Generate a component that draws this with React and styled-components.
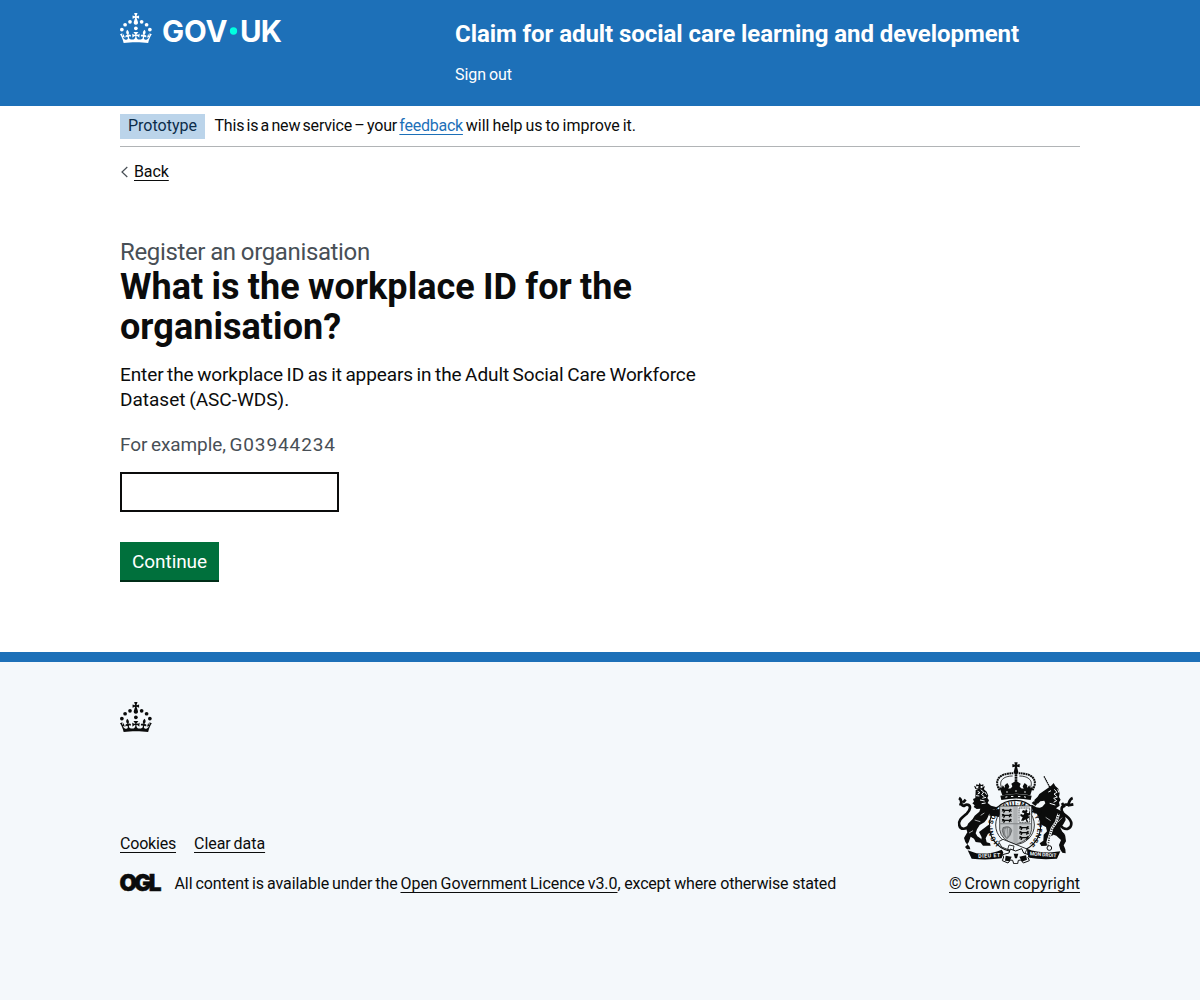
import React from 'react';
import styled, { createGlobalStyle, css } from 'styled-components';

const ink = '#0b0c0c';
const brand = '#1d70b8';
const secondary = '#484f56';
const footerBg = '#f4f8fb';

const GlobalStyle = createGlobalStyle`
  html { background: ${footerBg}; }
  body {
    margin: 0;
    background: #fff;
    color: ${ink};
    font-family: Roboto, "Liberation Sans", Arial, sans-serif;
    font-size: 16px;
    line-height: 20px;
    word-spacing: -1px;
  }
  *, *::before, *::after { box-sizing: border-box; }
`;

const Container = styled.div`
  width: 960px;
  margin: 0 auto;
`;

const tracking = css`
  letter-spacing: ${({ $track }) => $track || 0}px;
`;

const Header = styled.header`
  height: 106px;
  background: ${brand};
  color: #fff;
`;

const HeaderRow = styled(Container)`
  display: flex;
`;

const LogoLink = styled.a`
  display: block;
  width: 335px;
  padding-top: 13px;
  color: #fff;
  text-decoration: none;
`;

const LogoSvg = styled.svg`
  display: block;
  fill: currentColor;
  overflow: visible;
`;

const LogoWord = styled.text`
  font-family: Inter, Roboto, sans-serif;
  font-weight: 650;
  font-size: 59px;
  word-spacing: 0;
`;

const ServiceColumn = styled.div`
  flex: 1;
  padding-top: 19px;
`;

const ServiceName = styled.a`
  display: block;
  color: #fff;
  font-size: 24px;
  font-weight: 700;
  line-height: 30px;
  letter-spacing: -0.068px;
  word-spacing: 0;
  text-decoration: none;
`;

const ServiceNav = styled.nav`
  padding-top: 16px;
`;

const NavLink = styled.a`
  color: #fff;
  letter-spacing: -0.05px;
  text-decoration: none;
`;

const PhaseBanner = styled.div`
  display: flex;
  align-items: center;
  height: 41px;
  border-bottom: 1px solid #b1b4b6;
`;

const Tag = styled.strong`
  padding: 2px 8px 3px;
  margin-right: 9.5px;
  background: #bbd4ea;
  color: #0c2d4a;
  font-weight: 400;
`;

const Phrase = styled.span`
  white-space: pre;
  word-spacing: ${({ $gap = -1 }) => $gap}px;
  ${tracking}
`;

const Link = styled.a`
  color: ${({ $blue }) => ($blue ? brand : ink)};
  text-decoration: underline;
  text-decoration-thickness: 1px;
  text-underline-offset: 3px;
  text-decoration-skip-ink: none;
  white-space: nowrap;
  ${tracking}
`;

const BackRow = styled.div`
  display: flex;
  align-items: center;
  gap: 5px;
  padding-top: 15px;
`;

const Main = styled.main`
  width: 630px;
  padding: 55px 0 70px;
`;

const Caption = styled.span`
  display: block;
  color: ${secondary};
  font-size: 24px;
  line-height: 30px;
  letter-spacing: -0.36px;
  word-spacing: -0.5px;
`;

const Heading = styled.h1`
  margin: 0 0 15px;
  font-size: 36px;
  font-weight: 700;
  line-height: 40px;
  letter-spacing: 0.05px;
  word-spacing: -0.8px;
`;

const Body = styled.p`
  margin: 0 0 20px;
  font-size: 19px;
  line-height: 25px;
`;

const Line = styled.span`
  display: block;
  ${tracking}
`;

const Hint = styled.div`
  margin-bottom: 15px;
  color: ${secondary};
  font-size: 19px;
  line-height: 25px;
`;

const TextInput = styled.input`
  display: block;
  width: 219px;
  height: 40px;
  margin: 0 0 30px;
  padding: 5px;
  border: 2px solid ${ink};
  border-radius: 0;
  font: inherit;
`;

const Button = styled.button`
  display: block;
  height: 38px;
  padding: 1px 12px 0;
  margin-bottom: 2px;
  border: 0;
  background: #00703c;
  box-shadow: 0 2px 0 #002d18;
  color: #fff;
  font-family: inherit;
  font-size: 19px;
  line-height: 38px;
  letter-spacing: -0.07px;
`;

const Footer = styled.footer`
  min-height: 348px;
  border-top: 10px solid ${brand};
  background: ${footerBg};
`;

const FooterInner = styled(Container)`
  padding-top: 40px;
`;

const FooterMeta = styled.div`
  display: flex;
  justify-content: space-between;
  align-items: flex-end;
  padding-top: 30px;
`;

const FooterLinks = styled.div`
  display: flex;
  gap: 18px;
  margin-bottom: 20px;
`;

const LicenceRow = styled.div`
  display: flex;
  align-items: center;
`;

const OglSvg = styled.svg`
  display: block;
  width: 41px;
  height: 17px;
  margin: 0 13.5px 3px 0;
  overflow: visible;
`;

const OglWord = styled.text`
  font-family: Inter, sans-serif;
  font-weight: 900;
  font-size: 22.5px;
  stroke: ${ink};
  stroke-width: 0.5px;
`;

const Copyright = styled.div`
  display: flex;
  flex-direction: column;
  align-items: flex-end;
`;

const CrestSvg = styled.svg`
  display: block;
  width: 125px;
  height: 102px;
  margin: 0 2px 10px 0;
`;

const CrestText = styled.text`
  font-family: Roboto, sans-serif;
  font-weight: 700;
  font-size: ${({ $size }) => $size}px;
  word-spacing: 0;
`;

const dots = [[20, 17.6], [10.2, 23.5], [3.7, 33.2], [31.7, 30.6], [43.3, 17.6], [53.2, 23.5], [59.7, 33.2]];

function Crown() {
  return (
    <g>
      {dots.map(([x, y]) => <circle key={x} cx={x} cy={y} r="3.7" />)}
      <path d="M33.1,9.8c.2-.1.3-.3.5-.5l4.6,2.4v-6.8l-4.6,1.5c-.1-.2-.3-.3-.5-.5l1.9-5.9h-6.7l1.9,5.9c-.2.1-.3.3-.5.5l-4.6-1.5v6.8l4.6-2.4c.1.2.3.3.5.5l-2.6,8c-.9,2.8,1.2,5.7,4.1,5.7h0c3,0,5.1-2.9,4.1-5.7l-2.6-8ZM37,37.9s-3.4,3.8-4.1,6.1c2.2,0,4.2-.5,6.4-2.8l-.7,8.5c-2-2.8-4.4-4.1-5.7-3.8.1,3.1.5,6.7,5.8,7.2,3.7.3,6.7-1.5,7-3.8.4-2.6-2-4.3-3.7-1.6-1.4-4.5,2.4-6.1,4.9-3.2-1.9-4.5-1.8-7.7,2.4-10.9,3,4,2.6,7.3-1.2,11.1,2.4-1.3,6.2,0,4,4.6-1.2-2.8-3.7-2.2-4.2.2-.3,1.7.7,3.7,3,4.2,1.9.3,4.7-.9,7-5.9-1.3,0-2.4.7-3.9,1.7l2.4-8c.6,2.3,1.4,3.7,2.2,4.5.6-1.6.5-2.8,0-5.3l5,1.8c-2.6,3.6-5.2,8.7-7.3,17.5-7.4-1.1-15.7-1.7-24.5-1.7h0c-8.8,0-17.1.6-24.5,1.7-2.1-8.9-4.7-13.9-7.3-17.5l5-1.8c-.5,2.5-.6,3.7,0,5.3.8-.8,1.6-2.3,2.2-4.5l2.4,8c-1.5-1-2.6-1.7-3.9-1.7,2.3,5,5.2,6.2,7,5.9,2.3-.4,3.3-2.4,3-4.2-.5-2.4-3-3.1-4.2-.2-2.2-4.6,1.6-6,4-4.6-3.7-3.7-4.2-7.1-1.2-11.1,4.2,3.2,4.3,6.4,2.4,10.9,2.5-2.8,6.3-1.3,4.9,3.2-1.8-2.7-4.1-1-3.7,1.6.3,2.3,3.3,4.1,7,3.8,5.4-.5,5.7-4.2,5.8-7.2-1.3-.2-3.7,1-5.7,3.8l-.7-8.5c2.2,2.3,4.2,2.7,6.4,2.8-.7-2.3-4.1-6.1-4.1-6.1h10.6,0Z" />
    </g>
  );
}

function PassantLions({ x, y }) {
  return (
    <g transform={`translate(${x} ${y})`}>
      {[0, 15, 30].map((dy) => (
        <path
          key={dy}
          transform={`translate(0 ${dy})`}
          d="M2 3l5-2 4 3h13l4-3 5 2-3 2 3 5-5-1-1 3h-4l1-4H13l-3 5H6l2-5-6 2 2-4z"
        />
      ))}
    </g>
  );
}

function Crest() {
  return (
    <CrestSvg viewBox="9 21 375 306" fill={ink} aria-hidden="true">
      <defs>
        <path id="garter" d="M150 266A67 65 0 1 1 240 266" />
      </defs>

      {/* imperial crown */}
      <path d="M193 22h10l-2 7 8-2v10l-8-2 3 12h-12l3-12-8 2v-10l8 2z" />
      <circle cx="198" cy="51" r="7" />
      <g fill="none" stroke={ink}>
        <path strokeWidth="6" strokeDasharray="6 1.5" d="M149 106C130 76 148 54 190 55M247 106C266 76 248 54 206 55" />
        <path strokeWidth="2.5" d="M157 102C143 78 160 63 188 63M239 102C253 78 236 63 208 63" />
        <path strokeWidth="8" strokeDasharray="6 1.5" d="M198 58v29" />
      </g>
      <path d="M147 94l8 6 3-9 7 8-1-8 8-7 6 10-3 7 8-1 4-6-3-8 14-9 14 9-3 8 4 6 8 1-3-7 6-10 8 7-1 8 7-8 3 9 8-6-8 27q-41-10-84 0z" />
      <path d="M151 122q47-10 94 0l-3 13q-44-9-88 0z" />
      <g fill={footerBg}>
        <circle cx="171" cy="111" r="2.5" /><circle cx="198" cy="108" r="2.5" /><circle cx="225" cy="111" r="2.5" />
        <path d="M166 125l6-1v3l-6 1zM183 123h7v3h-7zM204 123h7v3h-7zM222 124l6 1v3l-6-1z" />
      </g>

      {/* lion supporter */}
      <path d="M76 102l-4-10 6 3 1-7 7 2 3-7 4 7 7-2v8l5-3-4 11q-13-5-25-2z" />
      <path d="M79 93l7 1-2 6h-6zM92 93h6l-1 6-5 1z" fill={footerBg} />
      <path d="M77 105l9-4 15 1 9 8 5 12-3 7 5 7-4 8 10 8 15 4 12-3 6 5-3 6 5 5-8 3-4 8-15-3-13-1-7 16-8 10-14 8-8 13-4 12 5 9 9 6 8 8-5 5-17-2-5-10-10-6-6 17-4 5 7 8 2 8H51l-6-7 7-7-6-8-4-12 10-17-3-10 5-16 14-14 6-10 14-12 3-9-11 1-9-6 3-5-7-6 5-5-3-8 7-3z" />
      <path d="M115 210l14 3 7 12-8 7-14 4-7 14 3 12 10 3 2 7H99l-7-9 3-16-8-16z" />
      <path fill="none" stroke={ink} strokeWidth="8" strokeLinejoin="round" d="M62 208c-14 18-31 16-34 3-4-16 9-24 22-35 13-12 13-25 2-27-8-2-8 8-15 2-7-5 2-15-10-22M40 150l-12-3M39 143l8-9" />
      <g fill="none" stroke={footerBg} strokeWidth="3">
        <path d="M83 109l7 4-7 4M92 104l9 7-6 8 8 6M78 122l10 1M97 130l11-3M104 111l6 8M90 135l14 3M95 146l12-2M122 163l18 3M121 179l19-2" />
        <path strokeWidth="2" d="M74 195l17 5M57 234l12-7M92 181l11-7" />
      </g>

      {/* unicorn supporter */}
      <path fill="none" stroke={ink} strokeWidth="4" strokeDasharray="5 1.5" d="M282 64l19 36" />
      <path d="M295 98l10-7 6-7 5 9 9 8 4 13-2 12 5 8-5 8 2 10-11 8 14 7 13 13 2 15-7 13-9 10 6 12 8 7 3 22-7 12 5 12 1 12-10-2-6-9-4-14 6-15-14-13-20-7-5-15-19-11-15-10-14 4-12 16-8-4 7-24-14 2-4-9 9-10 18 1 8-9 13-5 14-6 9-10-3-8-12 2-7 7-10-3-1-8 10-10 5-8z" />
      <path d="M299 214l14 12-3 14-17 8-4 14 3 10-18 1-5-8 11-8 1-18 10-10-3-12z" />
      <path d="M256 153l-11-9 7-6 10 8zM267 202l-9 16-2 15-7-5 3-19 7-14z" />
      <path fill="none" stroke={ink} strokeWidth="8" strokeLinejoin="round" d="M330 210c16 20 33 12 34-3 1-17-16-22-25-33-10-14 0-28 12-25 8 2 3-15 17-20M353 151l17-3M344 157l-8-13" />
      <g fill="none" stroke={footerBg} strokeWidth="3">
        <path d="M313 103l8 9-9 5 10 9-11 4 9 7-9 5M303 107l-8 4M323 103l4 10M299 145l17 5" />
        <path strokeWidth="2" d="M336 188l-12 13M340 230l7 12M287 187l15 10" />
      </g>
      <path fill="none" stroke={footerBg} strokeWidth="8" d="M326 177l-8 25-12 18-8 26-4 29" />
      <path fill="none" stroke={ink} strokeWidth="5" strokeDasharray="3 4" d="M326 177l-8 25-12 18-8 26-4 27" />
      <circle cx="298" cy="279" r="7" fill={footerBg} stroke={ink} strokeWidth="3" />

      {/* garter */}
      <ellipse cx="195" cy="213" rx="77" ry="77" fill={footerBg} stroke={ink} strokeWidth="3.5" />
      <ellipse cx="195" cy="210" rx="58" ry="58" fill="none" stroke={ink} strokeWidth="2.5" />
      <CrestText $size="20">
        <textPath href="#garter" textLength="318" lengthAdjust="spacing">HONI·SOIT·QUI·MAL·Y·PENSE</textPath>
      </CrestText>

      {/* forepaws gripping the garter */}
      <path d="M118 160l20 5 12-4 7 4-4 6 6 6-9 1-3 8-14-3-15-1z" />
      <path d="M276 160l-17-3-13-8-6 5 9 10-5 7 10 3 18 6z" />

      {/* quartered shield */}
      <path d="M149 153h96v71q-4 32-48 44-44-12-48-44z" fill="#c4c7c9" stroke={ink} strokeWidth="2" />
      <path d="M203 155h40v51h-40z" fill={footerBg} />
      <path d="M207 159h32v43h-32z" fill="none" stroke={ink} strokeWidth="2" strokeDasharray="4 1" />
      <path d="M190 155h13v110l-6 2-7-2z" fill="#aeb1b3" />
      <path d="M149 204h94v4h-94z" fill="#8e9193" />
      <PassantLions x="153" y="160" />
      <PassantLions x="205" y="212" />
      <path d="M213 197l5-10-7-4 1-7 8 4 3-5-8-3 4-7 7 2 2-5 5 6-3 5 6 2 3-6 2 9-6 4 5 9-5-2-4 4 4 7-5 1-4-8-5 4z" />
      <path d="M159 218q22-9 26 9-3 16-14 24-12-8-14-24z" fill="#85888a" stroke="#4e5153" strokeWidth="2" />
      <path d="M165 222l3 20M170 220v27M176 219l-2 23" fill="none" stroke="#d8dbdd" strokeWidth="2" />

      {/* belt, compartment and motto ribbon */}
      <path d="M146 260l13-7 72 29-7 15-40-9-29-12z" fill={footerBg} stroke={ink} strokeWidth="2.5" />
      <path d="M177 270l15 3-3 15-16-5z" fill={footerBg} stroke={ink} strokeWidth="2.5" />
      <path d="M157 299l20-5 4-12 16 6 18-7 6 13 18 6-5 7 4 10-18 7-7-9-8 1-2 10h-12l-3-10-7-1-7 9-17-7 4-11z" fill={footerBg} stroke={ink} strokeWidth="3" />
      <path d="M167 302l18 3-6 14-14-2zM208 305l20-4 3 13-15 6zM191 296h14l-4 14h-6z" />
      <path d="M53 286l26 9q41 4 76-11l5 8-5 18q-46 6-90 1z" />
      <path d="M231 281q33 13 75 11l25-3-10 22q-48 4-83-3l-6-11z" />
      <g fill={footerBg}>
        <CrestText $size="16" x="85" y="309" textLength="66" transform="rotate(-3 85 309)">DIEU ET</CrestText>
        <CrestText $size="15" x="239" y="301" textLength="80" transform="rotate(4 239 301)">MON DROIT</CrestText>
      </g>
    </CrestSvg>
  );
}

export default function App() {
  return (
    <>
      <GlobalStyle />
      <Header>
        <HeaderRow>
          <LogoLink href="#" aria-label="GOV.UK">
            <LogoSvg width="162" height="30" viewBox="0 0 324 60">
              <Crown />
              <LogoWord x="84" y="57" textLength="131">GOV</LogoWord>
              <circle cx="227" cy="36" r="7.3" fill="#00ffe0" />
              <LogoWord x="240" y="57" textLength="84">UK</LogoWord>
            </LogoSvg>
          </LogoLink>
          <ServiceColumn>
            <ServiceName href="#">Claim for adult social care learning and development</ServiceName>
            <ServiceNav><NavLink href="#">Sign out</NavLink></ServiceNav>
          </ServiceColumn>
        </HeaderRow>
      </Header>

      <Container>
        <PhaseBanner>
          <Tag>Prototype</Tag>
          <Phrase $gap={-1.5} $track={-0.18}>{'This is a new service – your '}</Phrase>
          <Link href="#" $blue $track={-0.25}>feedback</Link>
          <Phrase $track={-0.02}>{' will help us to improve it.'}</Phrase>
        </PhaseBanner>
        <BackRow>
          <svg width="9" height="12" viewBox="0 0 9 12" fill="none" stroke={secondary} strokeWidth="1.2">
            <path d="M7.3 1L2 6l5.3 5" />
          </svg>
          <Link href="#" $track={-0.1}>Back</Link>
        </BackRow>
        <Main>
          <Caption>Register an organisation</Caption>
          <Heading>What is the workplace ID for the organisation?</Heading>
          <Body>
            <Line $track={-0.107}>Enter the workplace ID as it appears in the Adult Social Care Workforce</Line>
            <Line>Dataset (ASC-WDS).</Line>
          </Body>
          <Hint>
            <Phrase $track={-0.09}>{'For example, '}</Phrase>
            <Phrase $track={0.9}>G03944234</Phrase>
          </Hint>
          <TextInput type="text" aria-label="Workplace ID" />
          <Button type="button">Continue</Button>
        </Main>
      </Container>

      <Footer>
        <FooterInner>
          <LogoSvg width="32" height="30" viewBox="0 0 64 60"><Crown /></LogoSvg>
          <FooterMeta>
            <div>
              <FooterLinks>
                <Link href="#" $track={-0.2}>Cookies</Link>
                <Link href="#" $track={-0.05}>Clear data</Link>
              </FooterLinks>
              <LicenceRow>
                <OglSvg viewBox="0 0 41 17" fill={ink}>
                  <OglWord x="-0.6" y="16.5" textLength="42">OGL</OglWord>
                </OglSvg>
                <Phrase $track={-0.063}>{'All content is available under the '}</Phrase>
                <Link href="#" $track={-0.04}>Open Government Licence v3.0</Link>
                <Phrase $gap={0} $track={-0.185}>, except where otherwise stated</Phrase>
              </LicenceRow>
            </div>
            <Copyright>
              <Crest />
              <Link href="#" $track={0.03}>© Crown copyright</Link>
            </Copyright>
          </FooterMeta>
        </FooterInner>
      </Footer>
    </>
  );
}
